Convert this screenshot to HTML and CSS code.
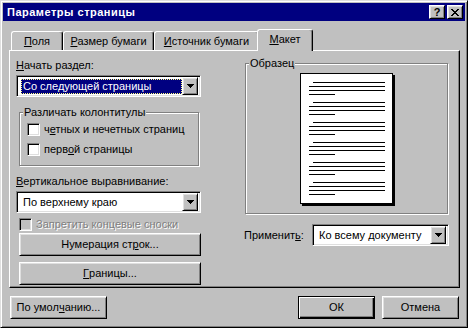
FILE: index.html
```html
<!DOCTYPE html>
<html lang="ru">
<head>
    <meta charset="UTF-8">
    <title>Параметры страницы</title>
    <link rel="stylesheet" href="styles.css">
</head>
<body>
    <div class="window">
        <div class="titlebar">
            <span class="title">Параметры страницы</span>
            <div class="title-buttons">
                <span class="tb-btn">?</span>
                <span class="tb-btn">
                    <svg width="8" height="7" viewBox="0 0 8 7" shape-rendering="crispEdges"><path d="M0 0h2v1h-2zM6 0h2v1h-2zM1 1h2v1h-2zM5 1h2v1h-2zM2 2h4v1h-4zM3 3h2v1h-2zM2 4h4v1h-4zM1 5h2v1h-2zM5 5h2v1h-2zM0 6h2v1h-2zM6 6h2v1h-2z" fill="#000"/></svg>
                </span>
            </div>
        </div>
        <div class="content">
            <div class="tabs">
                <div class="tab tab-margins"><u>П</u>оля</div>
                <div class="tab tab-paper"><u>Р</u>азмер бумаги</div>
                <div class="tab tab-source"><u>И</u>сточник бумаги</div>
                <div class="tab tab-layout active"><u>М</u>акет</div>
            </div>
            <div class="panel">
                <div class="col-left">
                    <div class="label"><u>Н</u>ачать раздел:</div>
                    <div class="combo">
                        <span class="combo-value selected">Со следующей страницы</span>
                        <span class="combo-btn"><svg width="7" height="4" viewBox="0 0 7 4" shape-rendering="crispEdges"><path d="M0 0h7v1h-7zM1 1h5v1h-5zM2 2h3v1h-3zM3 3h1v1h-1z" fill="#000"/></svg></span>
                    </div>
                    <div class="group group-hf">
                        <span class="group-title">Различать колонтитулы</span>
                        <div class="check"><span class="box"></span><span>ч<u>е</u>тных и нечетных страниц</span></div>
                        <div class="check"><span class="box"></span><span>перв<u>о</u>й страницы</span></div>
                    </div>
                    <div class="label label-valign"><u>В</u>ертикальное выравнивание:</div>
                    <div class="combo">
                        <span class="combo-value">По верхнему краю</span>
                        <span class="combo-btn"><svg width="7" height="4" viewBox="0 0 7 4" shape-rendering="crispEdges"><path d="M0 0h7v1h-7zM1 1h5v1h-5zM2 2h3v1h-3zM3 3h1v1h-1z" fill="#000"/></svg></span>
                    </div>
                    <div class="check disabled"><span class="box"></span><span>Запретить концевые сноски</span></div>
                    <div class="btn btn-side">Нумерация ст<u>р</u>ок...</div>
                    <div class="btn btn-side btn-borders"><u>Г</u>раницы...</div>
                </div>
                <div class="col-right">
                    <div class="group group-sample">
                        <span class="group-title">Образец</span>
                        <div class="page">
                            <svg width="91" height="129" viewBox="0 0 91 129" shape-rendering="crispEdges">
                                <g fill="#000">
                                    <rect x="12" y="8" width="72" height="1"/><rect x="8" y="12" width="76" height="1"/><rect x="8" y="16" width="76" height="1"/><rect x="8" y="20" width="26" height="1"/>
                                    <rect x="12" y="28" width="72" height="1"/><rect x="8" y="32" width="76" height="1"/><rect x="8" y="36" width="76" height="1"/><rect x="8" y="40" width="26" height="1"/>
                                    <rect x="12" y="48" width="72" height="1"/><rect x="8" y="52" width="76" height="1"/><rect x="8" y="56" width="76" height="1"/><rect x="8" y="60" width="26" height="1"/>
                                    <rect x="12" y="68" width="72" height="1"/><rect x="8" y="72" width="76" height="1"/><rect x="8" y="76" width="76" height="1"/><rect x="8" y="80" width="26" height="1"/>
                                    <rect x="12" y="88" width="72" height="1"/><rect x="8" y="92" width="76" height="1"/><rect x="8" y="96" width="76" height="1"/><rect x="8" y="100" width="26" height="1"/>
                                    <rect x="12" y="108" width="72" height="1"/><rect x="8" y="112" width="76" height="1"/><rect x="8" y="116" width="76" height="1"/><rect x="8" y="120" width="26" height="1"/>
                                </g>
                            </svg>
                        </div>
                    </div>
                    <div class="apply-row">
                        <span class="apply-label">Применит<u>ь</u>:</span>
                        <div class="combo combo-apply">
                            <span class="combo-value">Ко всему документу</span>
                            <span class="combo-btn"><svg width="7" height="4" viewBox="0 0 7 4" shape-rendering="crispEdges"><path d="M0 0h7v1h-7zM1 1h5v1h-5zM2 2h3v1h-3zM3 3h1v1h-1z" fill="#000"/></svg></span>
                        </div>
                    </div>
                </div>
            </div>
            <div class="footer">
                <div class="btn btn-defaults">По умол<u>ч</u>анию...</div>
                <div class="btn btn-ok default">ОК</div>
                <div class="btn btn-ok">Отмена</div>
            </div>
        </div>
    </div>
</body>
</html>
```

FILE: styles.css
```css
* {
    box-sizing: border-box;
}
body {
    margin: 0;
    background-color: #c0c0c0;
    font-family: 'Liberation Sans', Arial, sans-serif;
    font-size: 11px;
    line-height: 13px;
    color: #000;
}
u {
    text-underline-offset: 1px;
}
.window {
    width: 468px;
    height: 328px;
    display: flex;
    flex-direction: column;
    padding: 2px;
    background-color: #c0c0c0;
    border: 1px solid;
    border-color: #dfdfdf #000 #000 #dfdfdf;
    box-shadow: inset 1px 1px #fff, inset -1px -1px #808080;
}
.titlebar {
    height: 18px;
    display: flex;
    align-items: center;
    padding: 0 2px 0 4px;
    background-color: #000080;
    color: #fff;
}
.title {
    flex: 1;
    font-weight: bold;
    font-size: 11px;
    letter-spacing: 0.5px;
}
.title-buttons {
    display: flex;
    gap: 2px;
}
.tb-btn, .combo-btn {
    width: 16px;
    height: 14px;
    display: flex;
    align-items: center;
    justify-content: center;
    background-color: #c0c0c0;
    color: #000;
    font-weight: bold;
    font-size: 11px;
    border: 1px solid;
    border-color: #fff #000 #000 #fff;
    box-shadow: inset 1px 1px #dfdfdf, inset -1px -1px #808080;
}
.content {
    flex: 1;
    display: flex;
    flex-direction: column;
    padding: 8px 5px 0 6px;
}
.tabs {
    height: 21px;
    display: flex;
    align-items: flex-end;
    padding-left: 2px;
    position: relative;
    z-index: 1;
}
.tab {
    height: 19px;
    padding-top: 3px;
    text-align: center;
    border: 1px solid;
    border-bottom: none;
    border-color: #fff #000 #000 #fff;
    border-radius: 3px 3px 0 0;
    box-shadow: inset -1px 0 #808080;
    white-space: nowrap;
}
.tab-margins {
    width: 52px;
}
.tab-paper {
    width: 91px;
}
.tab-source {
    width: 105px;
}
.tab-layout {
    width: 52px;
}
.tab.active {
    width: 56px;
    height: 22px;
    margin: 0 -2px -1px;
    background-color: #c0c0c0;
}
.panel {
    height: 238px;
    display: grid;
    grid-template-columns: 185px 205px;
    column-gap: 43px;
    align-items: start;
    padding: 8px 0 0 6px;
    border: 1px solid;
    border-color: #fff #000 #000 #fff;
    box-shadow: inset -1px -1px #808080;
}
.col-left, .col-right {
    display: flex;
    flex-direction: column;
}
.combo {
    height: 22px;
    display: flex;
    align-items: center;
    padding: 2px;
    background-color: #fff;
    border: 1px solid;
    border-color: #808080 #fff #fff #808080;
    box-shadow: inset 1px 1px #000, inset -1px -1px #dfdfdf;
    margin-top: 3px;
}
.combo-value {
    flex: 1;
    height: 15px;
    margin: 0 0 0 2px;
    padding-left: 1px;
    white-space: nowrap;
    overflow: hidden;
    border: 1px solid transparent;
}
.combo-value.selected {
    background-color: #000080;
    color: #fff;
    border: 1px dotted #ffff80;
}
.combo-btn {
    height: 18px;
}
.group {
    position: relative;
    border: 1px solid #808080;
    box-shadow: inset 1px 1px #fff, 1px 1px #fff;
}
.group-title {
    position: absolute;
    top: -7px;
    left: 3px;
    padding: 0 1px;
    background-color: #c0c0c0;
}
.group-hf {
    width: 180px;
    height: 54px;
    margin: 15px 0 0 3px;
    padding: 10px 0 0 7px;
}
.check {
    height: 13px;
    display: flex;
    align-items: center;
    gap: 4px;
    margin-bottom: 7px;
    white-space: nowrap;
}
.box {
    width: 13px;
    height: 13px;
    flex: none;
    background-color: #fff;
    border: 1px solid;
    border-color: #808080 #fff #fff #808080;
    box-shadow: inset 1px 1px #000, inset -1px -1px #dfdfdf;
}
.label-valign {
    margin-top: 9px;
}
.check.disabled {
    margin: 5px 0 0 3px;
    color: #808080;
    text-shadow: 1px 1px #fff;
}
.check.disabled .box {
    background-color: #c0c0c0;
}
.btn {
    height: 23px;
    display: flex;
    align-items: center;
    justify-content: center;
    background-color: #c0c0c0;
    white-space: nowrap;
    border: 1px solid;
    border-color: #fff #000 #000 #fff;
    box-shadow: inset 1px 1px #dfdfdf, inset -1px -1px #808080;
}
.btn.default {
    border-color: #000;
    box-shadow: inset 1px 1px #fff, inset -1px -1px #000, inset -2px -2px #808080;
}
.btn-side {
    width: 182px;
    margin: 2px 0 0 3px;
}
.btn-borders {
    margin-top: 6px;
}
.group-sample {
    width: 203px;
    height: 151px;
    margin: 4px 0 0 1px;
    padding: 9px 0 0 54px;
}
.page {
    width: 93px;
    height: 131px;
    background-color: #fff;
    border: 1px solid #000;
    box-shadow: 2px 2px #000;
}
.page svg {
    display: block;
}
.apply-row {
    display: flex;
    align-items: center;
    justify-content: space-between;
    margin-top: 10px;
}
.combo-apply {
    width: 137px;
    margin-top: 0;
}
.footer {
    display: flex;
    gap: 7px;
    margin-top: 8px;
    padding: 0 1px;
}
.btn-defaults {
    width: 97px;
    margin-right: auto;
}
.btn-ok {
    width: 77px;
}
```
